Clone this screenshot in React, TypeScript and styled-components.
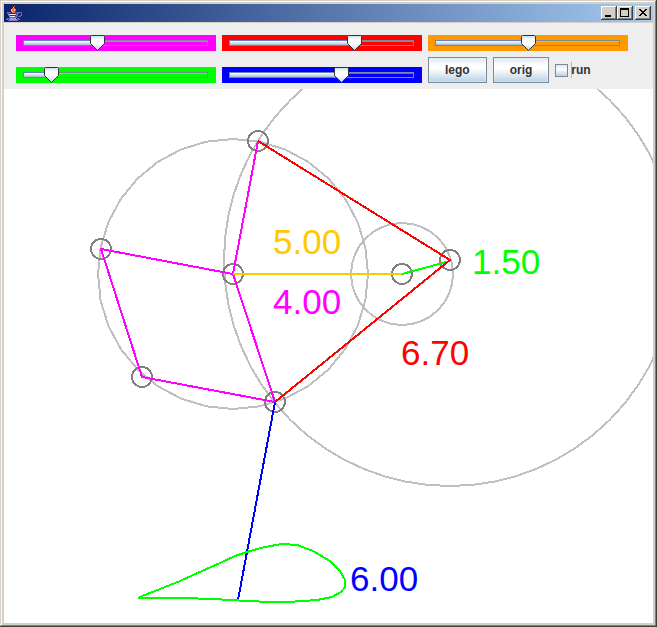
import React, { useState } from "react";
import styled, { createGlobalStyle } from "styled-components";

const GlobalStyle = createGlobalStyle`
  * { box-sizing: border-box; }
  body { margin: 0; font-family: "Liberation Sans", Arial, sans-serif; }
`;

const Frame = styled.main`
  padding: 4px;
  background: #d4d0c8;
  box-shadow:
    inset -1px -1px #404040,
    inset 1px 1px #d4d0c8,
    inset -2px -2px #808080,
    inset 2px 2px #ffffff;
`;

const TitleBar = styled.header`
  display: flex;
  align-items: center;
  justify-content: space-between;
  height: 18px;
  margin-bottom: 1px;
  padding: 0 2px;
  background: linear-gradient(90deg, #0a246a, #a6caf0);
`;

const WindowButtons = styled.div`
  display: flex;
`;

const WindowButton = styled.button<{ $apart?: boolean }>`
  display: flex;
  width: 16px;
  height: 14px;
  margin-left: ${(p) => (p.$apart ? 2 : 0)}px;
  padding: 0;
  border: 0;
  background: #d4d0c8;
  box-shadow:
    inset -1px -1px #404040,
    inset 1px 1px #ffffff,
    inset -2px -2px #808080;
`;

const Controls = styled.section`
  display: flex;
  flex-wrap: wrap;
  align-items: flex-end;
  gap: 6px;
  padding: 12px 12px 6px;
  background: #eeeeee;
`;

const SliderBox = styled.div<{ $color: string }>`
  position: relative;
  display: flex;
  align-items: center;
  width: 200px;
  height: 16px;
  background: ${(p) => p.$color};
`;

const Track = styled.div`
  flex: 1;
  height: 6px;
  margin: 0 8px 0 7px;
  border: 1px solid #7a8a99;
  box-shadow: inset 0 1px rgba(184, 207, 229, 0.5);
`;

const Fill = styled.div`
  height: 6px;
  margin: -1px;
  border: 1px solid #6382bf;
  background: linear-gradient(#ffffff, #c8d8ea 60%, #a3b8cc);
`;

const Thumb = styled.svg`
  position: absolute;
  top: 0;
`;

const Range = styled.input`
  position: absolute;
  inset: 0;
  width: 100%;
  margin: 0;
  appearance: none;
  background: transparent;
  &::-webkit-slider-thumb {
    appearance: none;
    width: 15px;
    height: 16px;
    background: transparent;
  }
`;

const PushButton = styled.button`
  height: 26px;
  padding: 0 16px;
  border: 1px solid #7a8a99;
  box-shadow: inset 0 0 0 1px rgba(255, 255, 255, 0.3);
  background: linear-gradient(#dde8f3, #ffffff 30%, #ffffff 45%, #b8cfe5);
  color: #333333;
  font: bold 12px "Liberation Sans", Arial, sans-serif;
`;

const CheckLabel = styled.label`
  display: flex;
  align-items: center;
  gap: 3px;
  height: 26px;
  color: #333333;
  font-size: 12px;
  font-weight: bold;
`;

const CheckBox = styled.input`
  appearance: none;
  width: 13px;
  height: 13px;
  margin: 0;
  border: 1px solid #7a8a99;
  background: linear-gradient(#dde8f3, #ffffff 40%, #b8cfe5);
  &:checked {
    background: #6382bf;
  }
`;

const CheckText = styled.span`
  line-height: 16px;
  box-shadow: inset 1px 0 #a3b8cc;
`;

const Canvas = styled.svg`
  display: block;
  width: 100%;
  height: auto;
  background: #ffffff;
  fill: none;
  stroke-width: 2px;
  stroke-linejoin: round;
  shape-rendering: crispEdges;
`;

const Measure = styled.text`
  stroke: none;
  font-size: 35px;
`;

interface SliderProps {
  name: string;
  color: string;
  start: number;
}

const TRAVEL = 185;

function Slider({ name, color, start }: SliderProps) {
  const [pos, setPos] = useState(start);
  return (
    <SliderBox $color={color}>
      <Track>
        <Fill style={{ width: pos }} />
      </Track>
      <Thumb width="15" height="16" viewBox="0 0 15 16" style={{ left: pos }} aria-hidden="true">
        <defs>
          <linearGradient id={`thumb-${name}`} x1="0" y1="0" x2="0" y2="1">
            <stop offset="0" stopColor="#c8dcef" />
            <stop offset="0.3" stopColor="#ffffff" />
            <stop offset="0.55" stopColor="#ffffff" />
            <stop offset="1" stopColor="#b8cfe5" />
          </linearGradient>
        </defs>
        <path
          d="M1.5 .5H13.5L14.5 1.5V8.5L7.5 15.5L.5 8.5V1.5Z"
          fill={`url(#thumb-${name})`}
          stroke="#333333"
        />
      </Thumb>
      <Range
        type="range"
        aria-label={name}
        min={0}
        max={TRAVEL}
        value={pos}
        onChange={(e) => setPos(Number(e.target.value))}
      />
    </SliderBox>
  );
}

function JavaCup() {
  return (
    <svg width="16" height="16" viewBox="0 0 16 16" fill="none" shapeRendering="crispEdges" aria-hidden="true">
      <path d="M7 0h1v2h-1v1h-1v1h-1v3h1v1h4v-1h-1v-1h1v-2h-1v-1h-1v-1h1v-1h-1v-1z" fill="#e8683c" />
      <path d="M7 2h1v1h-1zM5 4h1v2h-1zM8 4h1v2h-1zM6 6h1v1h-1z" fill="#ffc0a0" />
      <path d="M1 7h4v1h4v-1h4v2h-1v2h-1v2h-8v-2h-1v-2h-1z" fill="#6464b8" />
      <path d="M3 8.5H11M4 10.5H10" stroke="#30307c" />
      <path d="M3 9.5H10M4 11.5H9" stroke="#e4e4ff" />
      <path d="M13 7.5H15.5V10.5H14.5V11.5H12" stroke="#6464b8" />
      <path d="M1 13.5H3M0 14.5H2M11 13.5H13M12 14.5H14M2 15.5H12" stroke="#7474cc" />
      <path d="M4 13.5H10M3 14.5H11" stroke="#a0a0e0" />
    </svg>
  );
}

const sliders: SliderProps[] = [
  { name: "magenta", color: "#ff00ff", start: 74 },
  { name: "red", color: "#ff0000", start: 125 },
  { name: "orange", color: "#ff9900", start: 93 },
  { name: "green", color: "#00ff00", start: 28 },
  { name: "blue", color: "#0000ff", start: 112 },
];

const rings = [
  { cx: 233, cy: 274, r: 135, sides: 32 },
  { cx: 450, cy: 260, r: 226, sides: 64 },
  { cx: 402, cy: 274, r: 51, sides: 32 },
];

const joints = [
  [258, 141],
  [101, 249],
  [233, 274],
  [142, 377],
  [275, 402],
  [402, 274],
  [450, 260],
];

const links = [
  { color: "#ff00ff", points: "258,141 233,274 275,402 142,377 101,249 233,274" },
  { color: "#ffc800", points: "233,274 402,274" },
  { color: "#00ff00", points: "402,274 450,261" },
  { color: "#0000ff", points: "275,402 238,600" },
  { color: "#ff0000", points: "258,141 450,260 275,402" },
];

const footPath =
  "139,598 142,596 155,591 180,581 202,571 220,563 235,556 250,551 265,547 282,544 297,545 313,551 330,561 340,571 345,580 345,587 341,592 332,597 317,600 288,602 270,602 247,601 213,599 182,598";

const measures = [
  { x: 273, y: 254, color: "#ffc800", value: "5.00" },
  { x: 273, y: 314, color: "#ff00ff", value: "4.00" },
  { x: 472, y: 274, color: "#00ff00", value: "1.50" },
  { x: 401, y: 365, color: "#ff0000", value: "6.70" },
  { x: 350, y: 591, color: "#0000ff", value: "6.00" },
];

function ringPoints(cx: number, cy: number, r: number, sides: number) {
  return Array.from({ length: sides }, (_, i) => {
    const a = (i * 2 * Math.PI) / sides;
    return `${cx + r * Math.cos(a)},${cy + r * Math.sin(a)}`;
  }).join(" ");
}

export default function App() {
  const [running, setRunning] = useState(false);
  return (
    <Frame>
      <GlobalStyle />
      <TitleBar>
        <JavaCup />
        <WindowButtons>
          <WindowButton aria-label="Minimize">
            <svg width="16" height="14" aria-hidden="true">
              <path d="M4 9h6v2h-6z" />
            </svg>
          </WindowButton>
          <WindowButton aria-label="Maximize">
            <svg width="16" height="14" shapeRendering="crispEdges" aria-hidden="true">
              <path d="M3 2h9v9h-9zM4 4v6h7v-6z" fillRule="evenodd" />
            </svg>
          </WindowButton>
          <WindowButton $apart aria-label="Close">
            <svg width="16" height="14" shapeRendering="crispEdges" aria-hidden="true">
              <path d="M4 3h2v1h1v1h2v-1h1v-1h2v1h-1v1h-1v1h-1v1h1v1h1v1h1v1h-2v-1h-1v-1h-2v1h-1v1h-2v-1h1v-1h1v-1h1v-1h-1v-1h-1v-1h-1z" />
            </svg>
          </WindowButton>
        </WindowButtons>
      </TitleBar>
      <Controls>
        {sliders.map((s) => (
          <Slider key={s.name} {...s} />
        ))}
        <PushButton>lego</PushButton>
        <PushButton>orig</PushButton>
        <CheckLabel>
          <CheckBox type="checkbox" checked={running} onChange={(e) => setRunning(e.target.checked)} />
          <CheckText>run</CheckText>
        </CheckLabel>
      </Controls>
      <Canvas viewBox="4 89 649 534" role="img" aria-label="Leg linkage">
        {rings.map((c) => (
          <polygon key={c.r} points={ringPoints(c.cx, c.cy, c.r, c.sides)} stroke="#c0c0c0" />
        ))}
        {joints.map(([x, y]) => (
          <circle key={`${x}-${y}`} cx={x} cy={y} r="10" stroke="#808080" />
        ))}
        {links.map((l) => (
          <polyline key={l.color} points={l.points} stroke={l.color} />
        ))}
        <polygon points={footPath} stroke="#00ff00" />
        {measures.map((m) => (
          <Measure key={m.value} x={m.x} y={m.y} fill={m.color}>
            {m.value}
          </Measure>
        ))}
      </Canvas>
    </Frame>
  );
}
